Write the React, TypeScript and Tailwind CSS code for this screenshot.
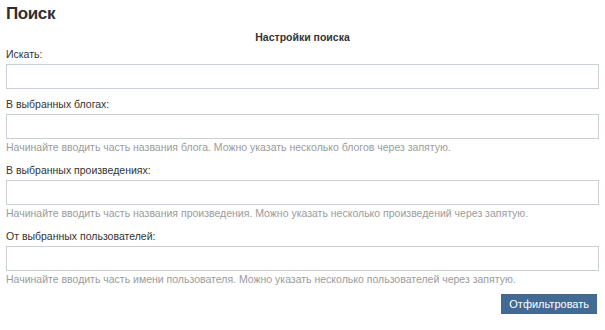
const hint = 'text-[10.5px] leading-[16px] text-[#9b9b9b]';

function Field({ label, note }: { label: string; note?: string }) {
  return (
    <div className="flex flex-col">
      <label className="text-[10.5px] leading-[14px] text-[#333]">{label}</label>
      <input className="mt-[3px] h-[25px] w-full border border-[#c9d0d8] bg-white px-1 outline-none" />
      {note && <div className={hint}>{note}</div>}
    </div>
  );
}

export default function App() {
  return (
    <div className="h-[330px] w-[605px] bg-white px-[6px] pt-[3px] font-['Liberation_Sans',Arial,sans-serif]">
      <h1 className="text-[17px] font-bold leading-[22px] tracking-[-0.4px] text-[#2f2f33]">Поиск</h1>
      <div className="mt-[5px] text-center text-[10.5px] font-bold leading-[14px] text-[#333]">Настройки поиска</div>
      <div className="mt-[3px] flex flex-col gap-[8px]">
        <Field label="Искать:" />
        <Field label="В выбранных блогах:" note="Начинайте вводить часть названия блога. Можно указать несколько блогов через запятую." />
        <Field label="В выбранных произведениях:" note="Начинайте вводить часть названия произведения. Можно указать несколько произведений через запятую." />
        <Field label="От выбранных пользователей:" note="Начинайте вводить часть имени пользователя. Можно указать несколько пользователей через запятую." />
      </div>
      <div className="mt-[7px] flex justify-end pr-[2px]">
        <button className="h-[20px] bg-[#426a93] px-[8px] text-[11px] leading-[20px] text-white">Отфильтровать</button>
      </div>
    </div>
  );
}
